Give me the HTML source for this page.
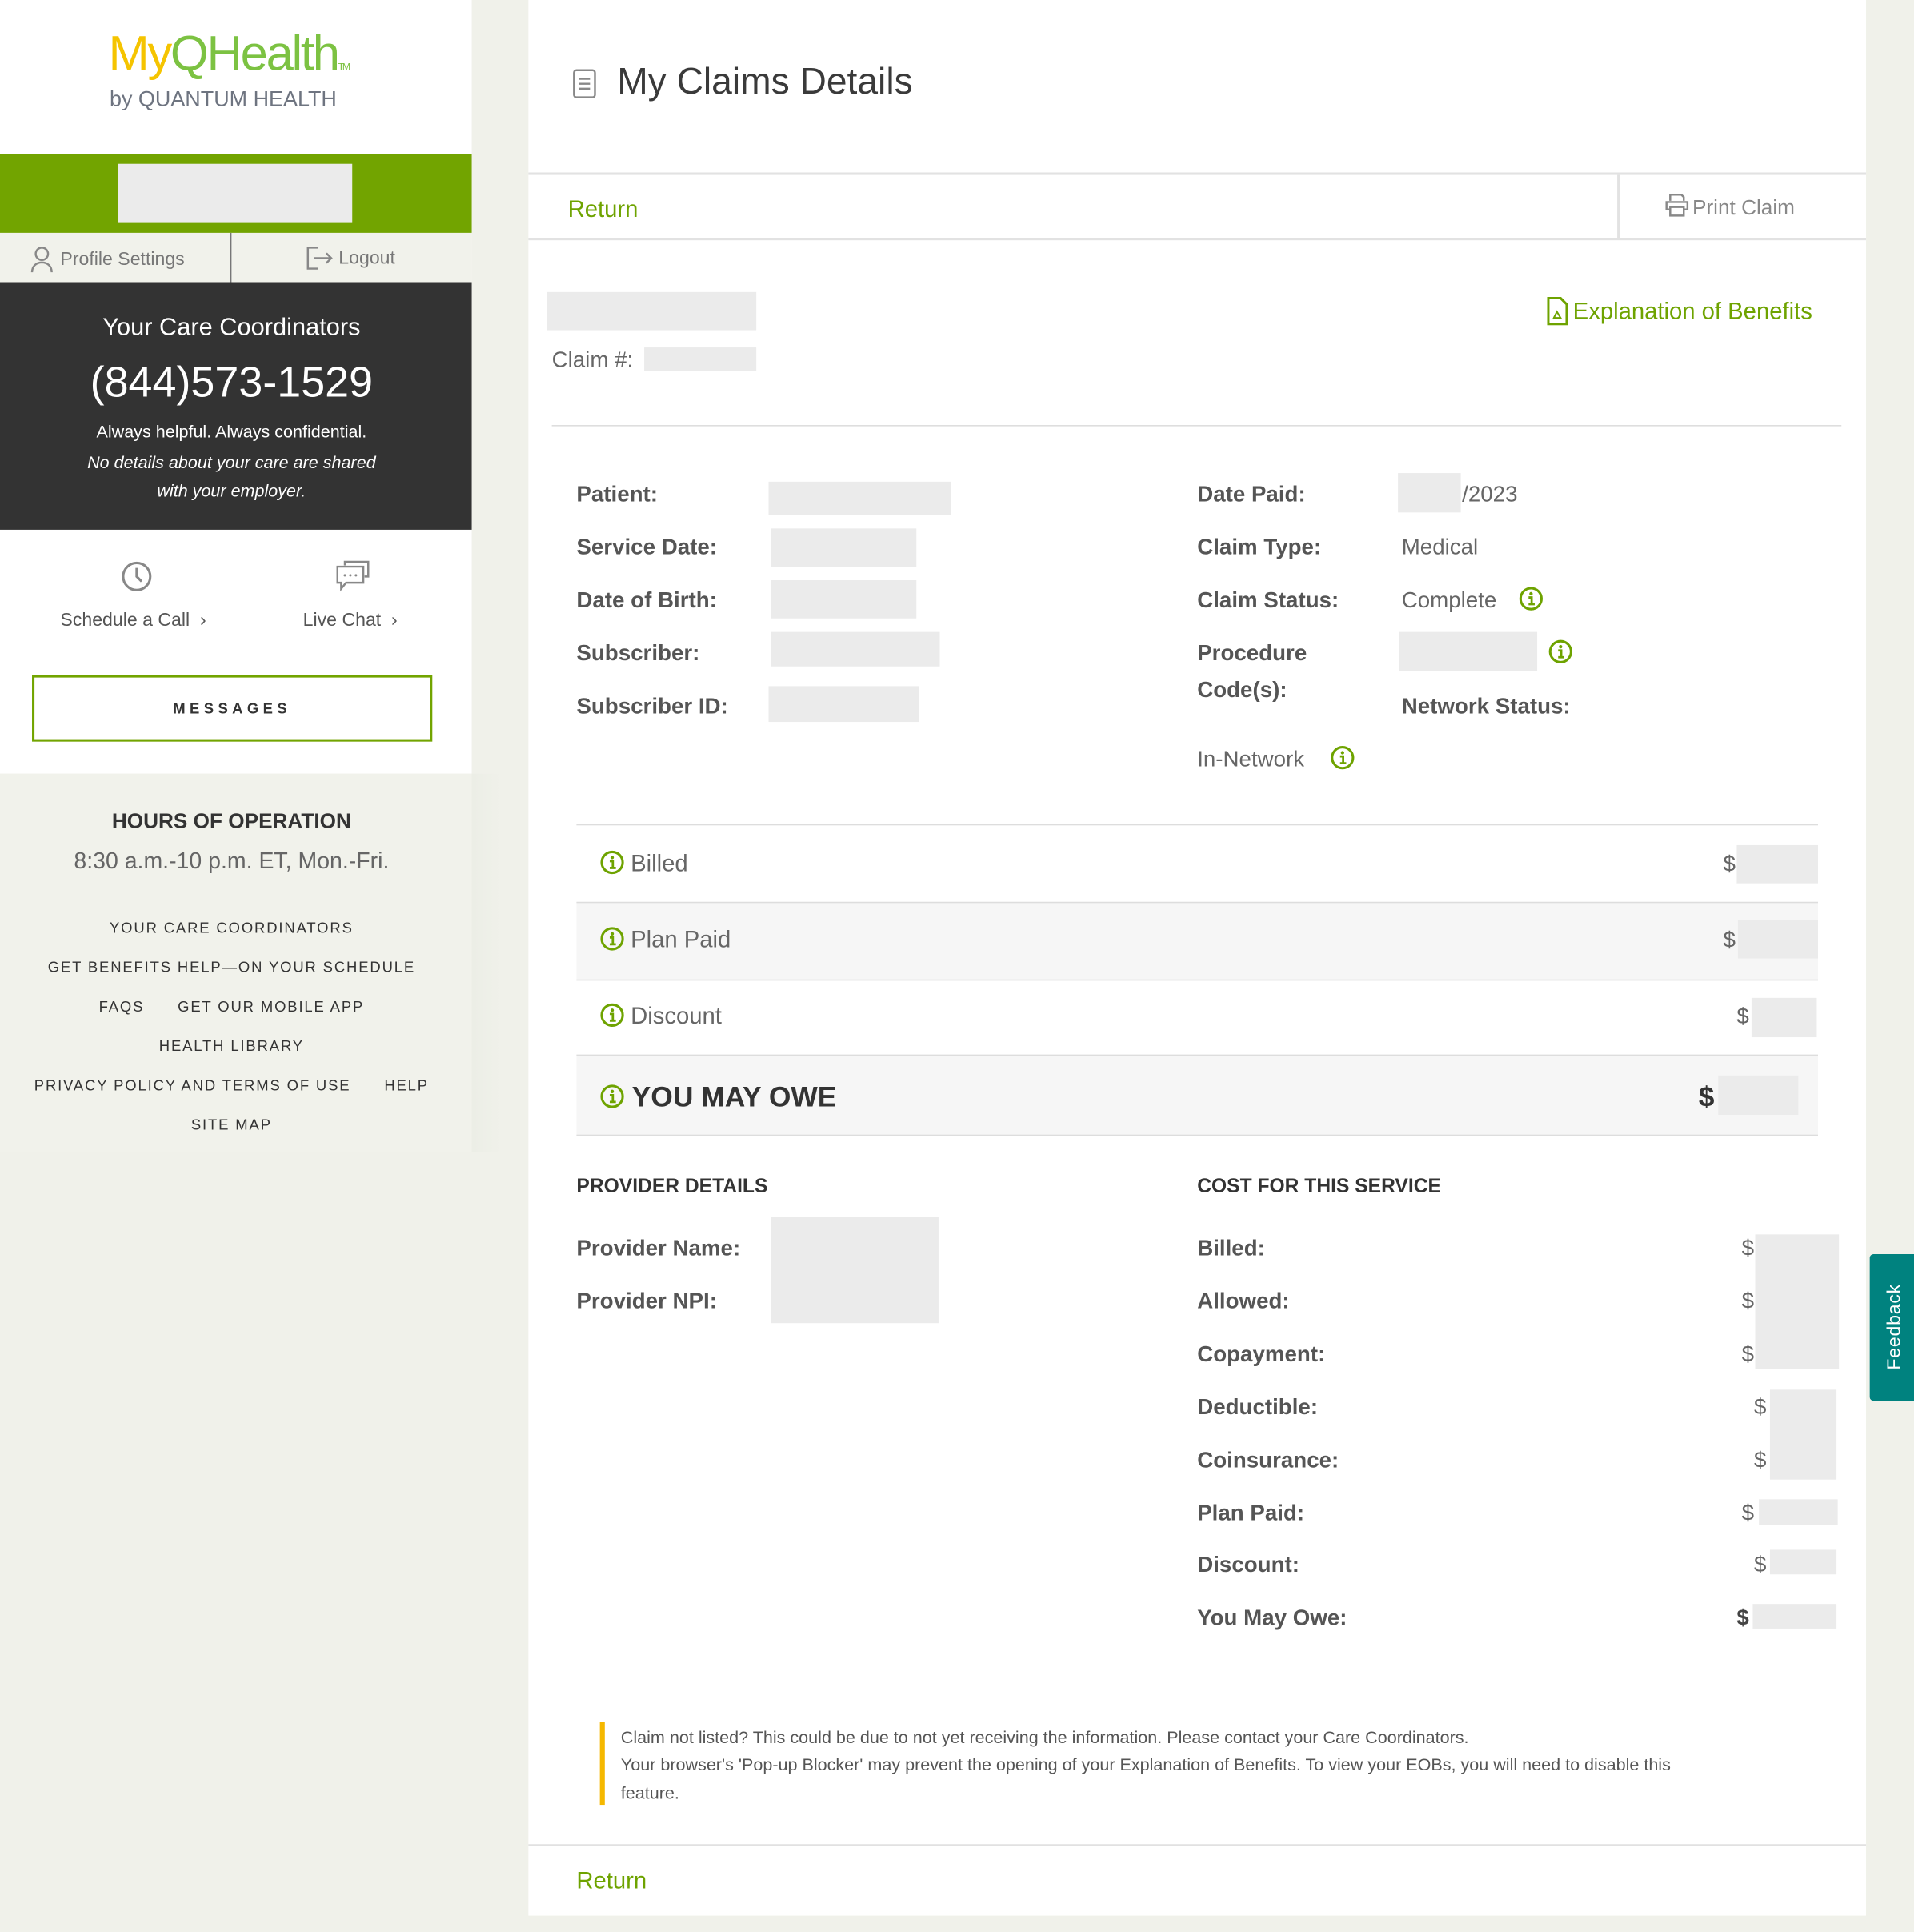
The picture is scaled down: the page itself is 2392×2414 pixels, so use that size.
<!DOCTYPE html>
<html><head><meta charset="utf-8"><style>
html,body{margin:0;padding:0;}
body{width:2392px;height:2414px;overflow:hidden;background:#f0f1ea;font-family:"Liberation Sans",Arial,sans-serif;}
#w{position:absolute;left:0;top:0;width:1554px;height:1568px;transform:scale(1.5393);transform-origin:0 0;}
.a{position:absolute;}
.t{position:absolute;white-space:nowrap;line-height:1;}
.b{position:absolute;background:#ebebeb;}
.lbl{position:absolute;white-space:nowrap;line-height:1;font-size:18px;font-weight:bold;color:#555;}
.val{position:absolute;white-space:nowrap;line-height:1;font-size:18px;color:#666;}
.lk{position:absolute;left:0;width:376px;text-align:center;font-size:12px;letter-spacing:1.2px;color:#333;line-height:1;white-space:nowrap;}
.g{color:#6ea300;}
</style></head><body><div id="w">

<!-- sidebar -->
<div class="a" style="left:0;top:0;width:383px;height:628px;background:#fff;"></div>
<div class="a" style="left:0;top:628px;width:383px;height:307px;background:#f1f2eb;"></div>
<div class="a" style="left:383px;top:628px;width:25px;height:307px;background:linear-gradient(90deg,#eceee6,#f0f1ea);"></div>
<div class="t" style="left:88px;top:24px;font-size:40px;letter-spacing:-1.5px;"><span style="color:#f5c400">My</span><span style="color:#7cc242">QHealth</span><span style="font-size:8px;color:#7cc242">TM</span></div>
<div class="t" style="left:89px;top:72px;font-size:17.5px;color:#6e7480;">by QUANTUM HEALTH</div>
<div class="a" style="left:0;top:125px;width:383px;height:64px;background:#72a400;"></div>
<div class="a" style="left:96px;top:133px;width:190px;height:48px;background:#ebebeb;"></div>
<div class="a" style="left:0;top:189px;width:383px;height:40px;background:#f1f2eb;"></div>
<div class="a" style="left:187px;top:189px;width:1px;height:40px;background:#777;"></div>
<svg class="a" style="left:24px;top:199px" width="20" height="23" viewBox="0 0 20 23"><circle cx="10" cy="7" r="5" fill="none" stroke="#888" stroke-width="1.6"/><path d="M2 22c0-5 3.5-8 8-8s8 3 8 8" fill="none" stroke="#888" stroke-width="1.6"/></svg>
<div class="t" style="left:49px;top:203px;font-size:15px;color:#777;">Profile Settings</div>
<svg class="a" style="left:249px;top:200px" width="22" height="19" viewBox="0 0 22 19"><path d="M9 1H1v17h8" fill="none" stroke="#888" stroke-width="1.6"/><path d="M6 9.5h14M16 5.5l4 4-4 4" fill="none" stroke="#888" stroke-width="1.6"/></svg>
<div class="t" style="left:275px;top:202px;font-size:15px;color:#777;">Logout</div>
<div class="a" style="left:0;top:229px;width:383px;height:201px;background:#333;"></div>
<div class="t" style="left:0;width:376px;text-align:center;top:256px;font-size:20px;color:#fff;">Your Care Coordinators</div>
<div class="t" style="left:0;width:376px;text-align:center;top:293px;font-size:35px;color:#fff;">(844)573-1529</div>
<div class="t" style="left:0;width:376px;text-align:center;top:343px;font-size:14px;color:#fff;">Always helpful. Always confidential.</div>
<div class="t" style="left:0;width:376px;text-align:center;top:368px;font-size:14px;color:#fff;font-style:italic;">No details about your care are shared</div>
<div class="t" style="left:0;width:376px;text-align:center;top:391px;font-size:14px;color:#fff;font-style:italic;">with your employer.</div>
<svg class="a" style="left:98px;top:455px" width="26" height="26" viewBox="0 0 26 26"><circle cx="13" cy="13" r="11" fill="none" stroke="#888" stroke-width="2"/><path d="M13 6v7l4 4" fill="none" stroke="#888" stroke-width="2"/></svg>
<div class="t" style="left:49px;top:496px;font-size:15px;color:#555;">Schedule a Call &nbsp;›</div>
<svg class="a" style="left:273px;top:455px" width="28" height="26" viewBox="0 0 28 26"><path d="M7 4V1h19v12h-3" fill="none" stroke="#888" stroke-width="1.6"/><path d="M1 5h21v13H8l-4 5v-5H1z" fill="none" stroke="#888" stroke-width="1.6"/><circle cx="7" cy="12" r="1" fill="#888"/><circle cx="11.5" cy="12" r="1" fill="#888"/><circle cx="16" cy="12" r="1" fill="#888"/></svg>
<div class="t" style="left:246px;top:496px;font-size:15px;color:#555;">Live Chat &nbsp;›</div>
<div class="a" style="left:26px;top:548px;width:321px;height:50px;border:2px solid #72a400;"></div>
<div class="t" style="left:26px;width:325px;text-align:center;top:569px;font-size:12px;font-weight:bold;letter-spacing:3.5px;color:#333;">MESSAGES</div>
<div class="t" style="left:0;width:376px;text-align:center;top:658px;font-size:17px;font-weight:bold;color:#333;">HOURS OF OPERATION</div>
<div class="t" style="left:0;width:376px;text-align:center;top:690px;font-size:18.5px;color:#666;">8:30 a.m.-10 p.m. ET, Mon.-Fri.</div>
<div class="lk" style="top:747px;">YOUR CARE COORDINATORS</div>
<div class="lk" style="top:779px;">GET BENEFITS HELP—ON YOUR SCHEDULE</div>
<div class="lk" style="top:811px;">FAQS &nbsp;&nbsp;&nbsp;&nbsp; GET OUR MOBILE APP</div>
<div class="lk" style="top:843px;">HEALTH LIBRARY</div>
<div class="lk" style="top:875px;">PRIVACY POLICY AND TERMS OF USE &nbsp;&nbsp;&nbsp;&nbsp; HELP</div>
<div class="lk" style="top:907px;">SITE MAP</div>

<!-- main -->
<div class="a" style="left:429px;top:0;width:1086px;height:1555px;background:#fff;"></div>
<svg class="a" style="left:465px;top:56px" width="19" height="24" viewBox="0 0 19 24"><rect x="1" y="1" width="17" height="22" rx="2" fill="none" stroke="#888" stroke-width="1.6"/><path d="M5 8h9M5 12h9M5 16h9" stroke="#888" stroke-width="1.6"/></svg>
<div class="t" style="left:501px;top:52px;font-size:30px;color:#3a3a3a;">My Claims Details</div>
<div class="a" style="left:429px;top:140px;width:1086px;height:2px;background:#e2e2e2;"></div>
<div class="a" style="left:1313px;top:142px;width:2px;height:52px;background:#e2e2e2;"></div>
<div class="t g" style="left:461px;top:161px;font-size:19px;">Return</div>
<svg class="a" style="left:1352px;top:157px" width="19" height="19" viewBox="0 0 19 19"><path d="M4 6V1h9l2 2v3M4 13H1V7h17v6h-3M4 11h11v7H4z" fill="none" stroke="#888" stroke-width="1.6"/></svg>
<div class="t" style="left:1374px;top:160px;font-size:17px;color:#888;">Print Claim</div>
<div class="a" style="left:429px;top:193px;width:1086px;height:2px;background:#e2e2e2;"></div>
<div class="b" style="left:444px;top:237px;width:170px;height:31px;"></div>
<div class="t" style="left:448px;top:283px;font-size:18px;color:#666;">Claim #:</div>
<div class="b" style="left:523px;top:282px;width:91px;height:19px;"></div>
<svg class="a" style="left:1256px;top:241px" width="17" height="23" viewBox="0 0 17 23"><path d="M1 1h10l5 5v16H1z" fill="none" stroke="#6ea300" stroke-width="2"/><path d="M5 18l3-6 3 5H5" fill="none" stroke="#6ea300" stroke-width="1.3"/></svg>
<div class="t g" style="left:1277px;top:244px;font-size:19px;">Explanation of Benefits</div>
<div class="a" style="left:448px;top:345px;width:1047px;height:1px;background:#ddd;"></div>

<div class="lbl" style="left:468px;top:392px;">Patient:</div><div class="b" style="left:624px;top:391px;width:148px;height:27px;"></div>
<div class="lbl" style="left:468px;top:435px;">Service Date:</div><div class="b" style="left:626px;top:429px;width:118px;height:31px;"></div>
<div class="lbl" style="left:468px;top:478px;">Date of Birth:</div><div class="b" style="left:626px;top:471px;width:118px;height:31px;"></div>
<div class="lbl" style="left:468px;top:521px;">Subscriber:</div><div class="b" style="left:626px;top:513px;width:137px;height:28px;"></div>
<div class="lbl" style="left:468px;top:564px;">Subscriber ID:</div><div class="b" style="left:624px;top:557px;width:122px;height:29px;"></div>

<div class="lbl" style="left:972px;top:392px;">Date Paid:</div><div class="b" style="left:1135px;top:384px;width:51px;height:32px;"></div><div class="val" style="left:1187px;top:392px;">/2023</div>
<div class="lbl" style="left:972px;top:435px;">Claim Type:</div><div class="val" style="left:1138px;top:435px;">Medical</div>
<div class="lbl" style="left:972px;top:478px;">Claim Status:</div><div class="val" style="left:1138px;top:478px;">Complete</div>
<div class="lbl" style="left:972px;top:521px;">Procedure</div><div class="lbl" style="left:972px;top:551px;">Code(s):</div>
<div class="b" style="left:1136px;top:513px;width:112px;height:32px;"></div>
<div class="lbl" style="left:1138px;top:564px;">Network Status:</div>
<div class="val" style="left:972px;top:607px;">In-Network</div>

<svg class="a" style="left:1233px;top:476px" width="20" height="20"><use href="#ii"/></svg>
<svg class="a" style="left:1257px;top:519px" width="20" height="20"><use href="#ii"/></svg>
<svg class="a" style="left:1080px;top:605px" width="20" height="20"><use href="#ii"/></svg>
<svg width="0" height="0" style="position:absolute"><defs><g id="ii"><circle cx="10" cy="10" r="8.5" fill="none" stroke="#6ea300" stroke-width="2"/><circle cx="10" cy="6" r="1.4" fill="#6ea300"/><path d="M8 9h2.5v5.5M8 14.5h5" fill="none" stroke="#6ea300" stroke-width="1.8"/></g></defs></svg>

<div class="a" style="left:468px;top:669px;width:1008px;height:1px;background:#ddd;"></div>
<div class="a" style="left:468px;top:732px;width:1008px;height:62px;background:#f6f6f6;border-top:1px solid #ddd;border-bottom:1px solid #ddd;"></div>
<div class="a" style="left:468px;top:856px;width:1008px;height:64px;background:#f6f6f6;border-top:1px solid #ddd;border-bottom:1px solid #ddd;"></div>
<svg class="a" style="left:487px;top:690px" width="20" height="20"><use href="#ii"/></svg>
<div class="val" style="left:512px;top:692px;font-size:19px;">Billed</div>
<div class="val" style="left:1399px;top:692px;">$</div><div class="b" style="left:1410px;top:686px;width:66px;height:31px;"></div>
<svg class="a" style="left:487px;top:752px" width="20" height="20"><use href="#ii"/></svg>
<div class="val" style="left:512px;top:754px;font-size:19px;">Plan Paid</div>
<div class="val" style="left:1399px;top:754px;">$</div><div class="b" style="left:1411px;top:747px;width:65px;height:31px;"></div>
<svg class="a" style="left:487px;top:814px" width="20" height="20"><use href="#ii"/></svg>
<div class="val" style="left:512px;top:816px;font-size:19px;">Discount</div>
<div class="val" style="left:1410px;top:816px;">$</div><div class="b" style="left:1422px;top:810px;width:53px;height:32px;"></div>
<svg class="a" style="left:487px;top:880px" width="20" height="20"><use href="#ii"/></svg>
<div class="t" style="left:513px;top:879px;font-size:23px;font-weight:bold;color:#333;">YOU MAY OWE</div>
<div class="t" style="left:1379px;top:879px;font-size:23px;font-weight:bold;color:#333;">$</div><div class="b" style="left:1395px;top:873px;width:65px;height:32px;"></div>

<div class="t" style="left:468px;top:956px;font-size:16px;font-weight:bold;color:#333;">PROVIDER DETAILS</div>
<div class="t" style="left:972px;top:956px;font-size:16px;font-weight:bold;color:#333;">COST FOR THIS SERVICE</div>
<div class="lbl" style="left:468px;top:1004px;">Provider Name:</div>
<div class="lbl" style="left:468px;top:1047px;">Provider NPI:</div>
<div class="b" style="left:626px;top:988px;width:136px;height:86px;"></div>

<div class="lbl" style="left:972px;top:1004px;">Billed:</div>
<div class="lbl" style="left:972px;top:1047px;">Allowed:</div>
<div class="lbl" style="left:972px;top:1090px;">Copayment:</div>
<div class="lbl" style="left:972px;top:1133px;">Deductible:</div>
<div class="lbl" style="left:972px;top:1176px;">Coinsurance:</div>
<div class="lbl" style="left:972px;top:1219px;">Plan Paid:</div>
<div class="lbl" style="left:972px;top:1261px;">Discount:</div>
<div class="lbl" style="left:972px;top:1304px;">You May Owe:</div>
<div class="val" style="left:1414px;top:1004px;">$</div>
<div class="val" style="left:1414px;top:1047px;">$</div>
<div class="val" style="left:1414px;top:1090px;">$</div>
<div class="val" style="left:1424px;top:1133px;">$</div>
<div class="val" style="left:1424px;top:1176px;">$</div>
<div class="val" style="left:1414px;top:1219px;">$</div>
<div class="val" style="left:1424px;top:1261px;">$</div>
<div class="val" style="left:1410px;top:1304px;font-weight:bold;color:#444;">$</div>
<div class="b" style="left:1425px;top:1002px;width:68px;height:109px;"></div>
<div class="b" style="left:1437px;top:1128px;width:54px;height:73px;"></div>
<div class="b" style="left:1428px;top:1217px;width:64px;height:21px;"></div>
<div class="b" style="left:1437px;top:1258px;width:54px;height:20px;"></div>
<div class="b" style="left:1423px;top:1302px;width:68px;height:20px;"></div>

<div class="a" style="left:487px;top:1398px;width:4px;height:67px;background:#f5b800;"></div>
<div class="t" style="left:504px;top:1403px;font-size:14px;color:#555;">Claim not listed? This could be due to not yet receiving the information. Please contact your Care Coordinators.</div>
<div class="t" style="left:504px;top:1425px;font-size:14px;color:#555;">Your browser's 'Pop-up Blocker' may prevent the opening of your Explanation of Benefits. To view your EOBs, you will need to disable this</div>
<div class="t" style="left:504px;top:1448px;font-size:14px;color:#555;">feature.</div>
<div class="a" style="left:429px;top:1497px;width:1086px;height:1px;background:#ddd;"></div>
<div class="t g" style="left:468px;top:1518px;font-size:19px;">Return</div>

<div class="a" style="left:1518px;top:1018px;width:36px;height:119px;background:#00827f;border-radius:3px 0 0 3px;"></div>
<div class="t" style="left:1538px;top:1077px;font-size:15px;color:#fff;transform:translate(-50%,-50%) rotate(-90deg);letter-spacing:0.5px;">Feedback</div>
</div></body></html>
